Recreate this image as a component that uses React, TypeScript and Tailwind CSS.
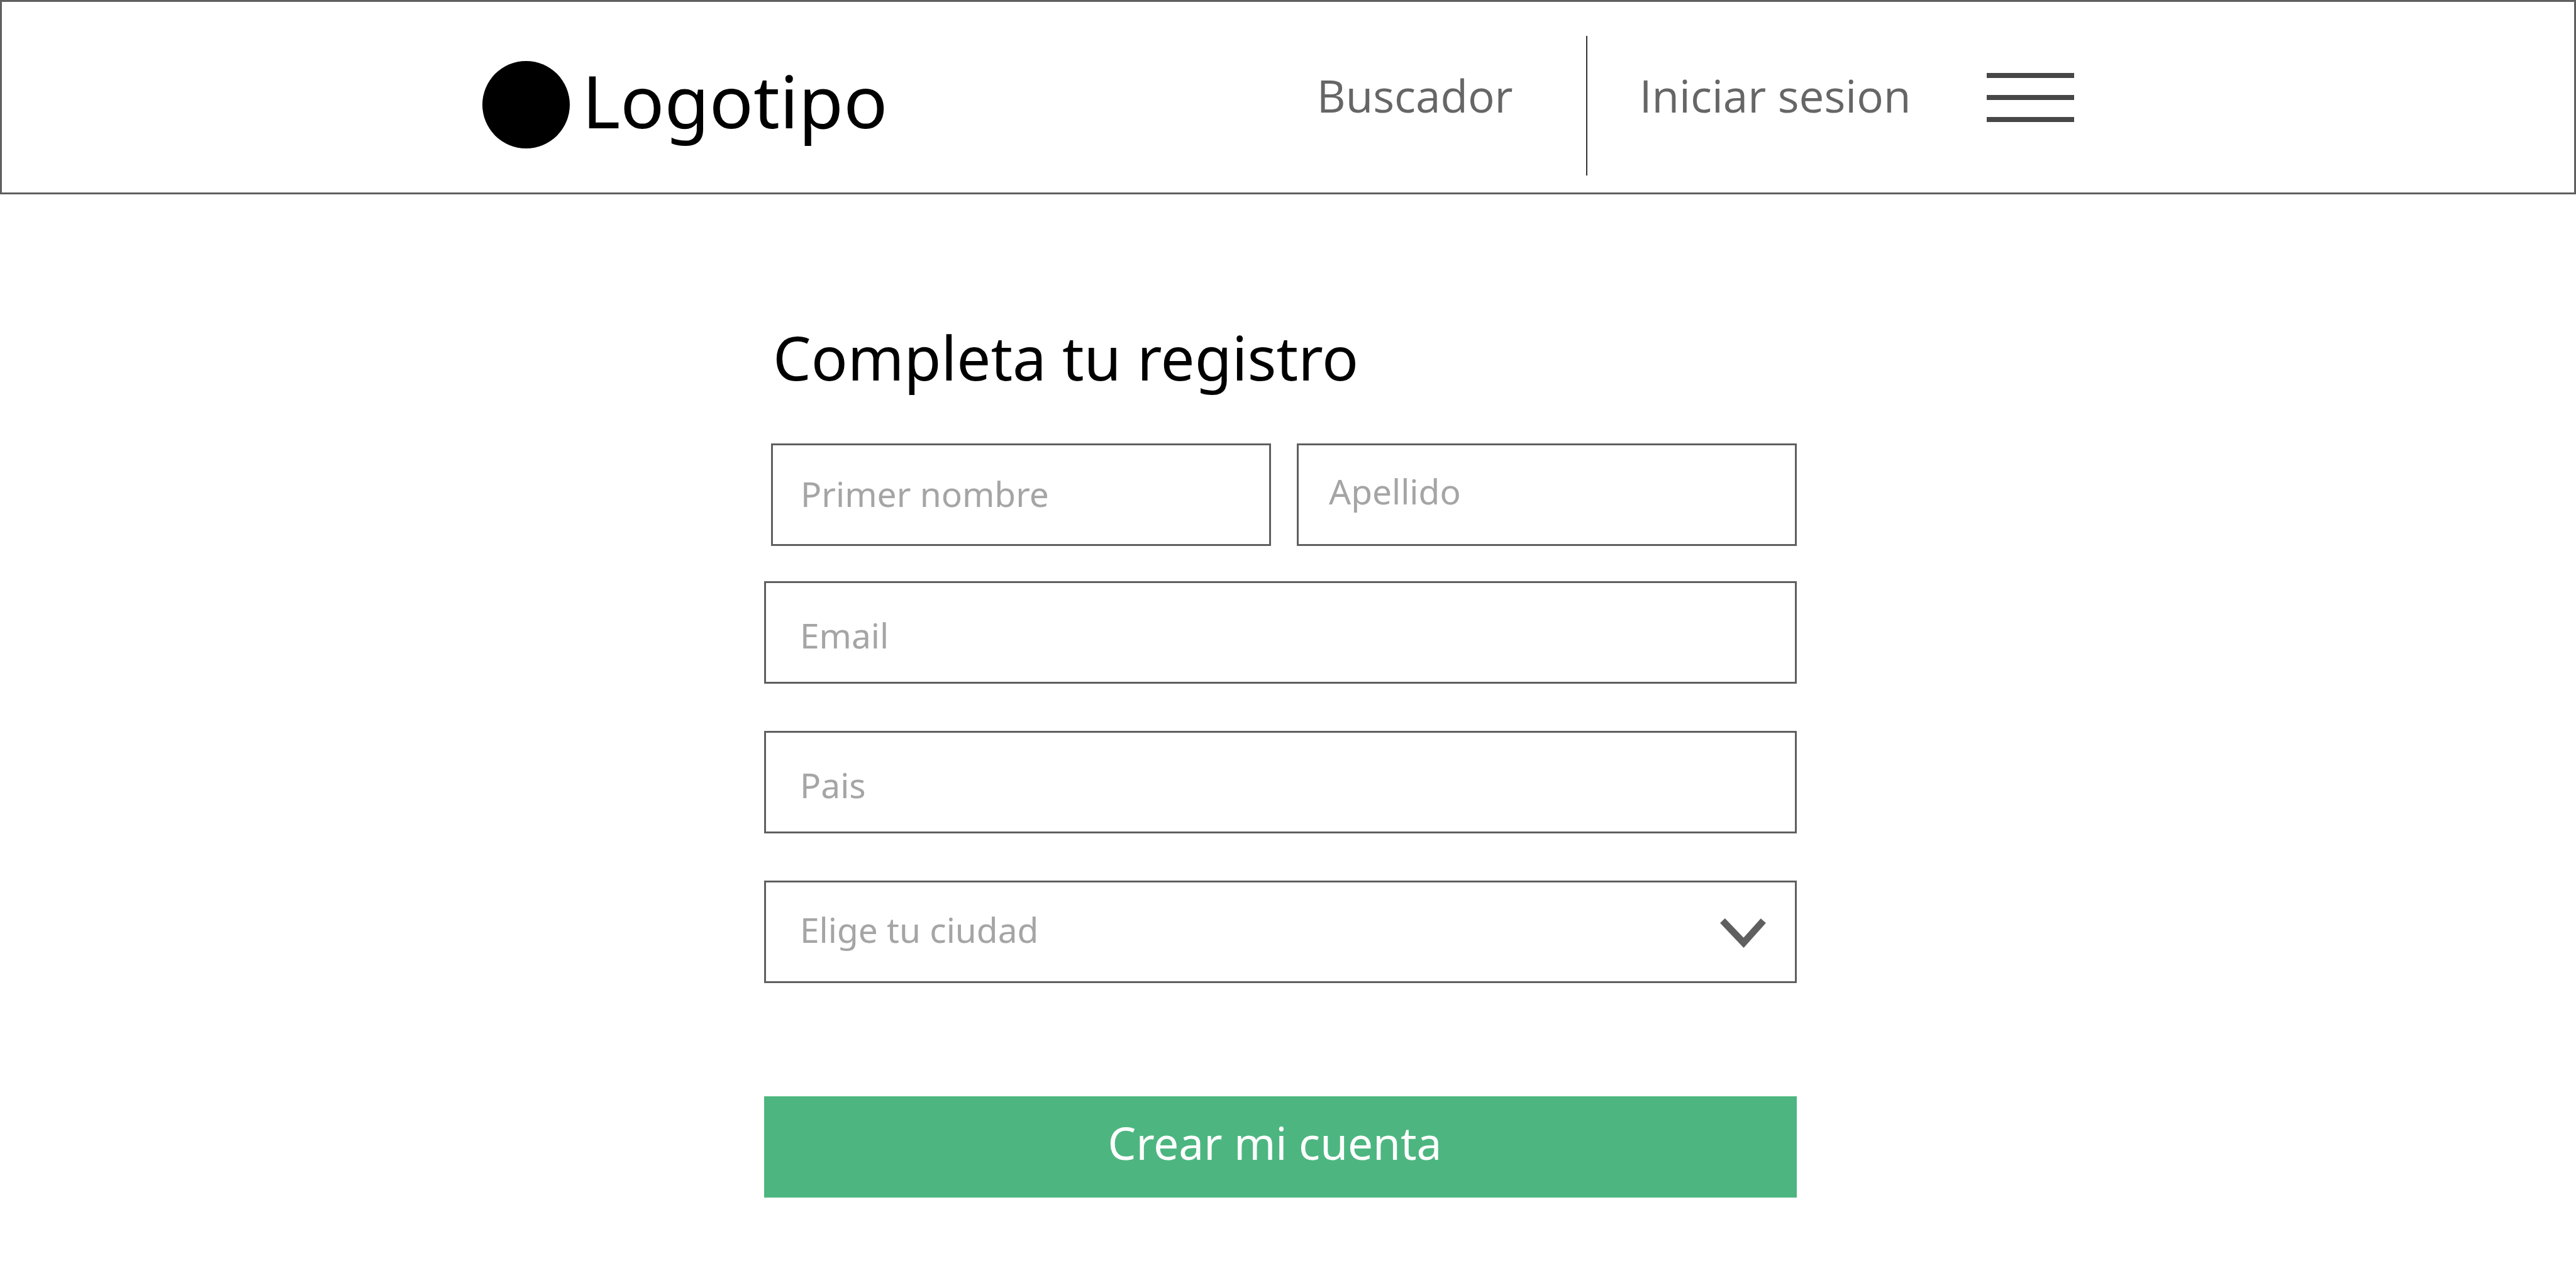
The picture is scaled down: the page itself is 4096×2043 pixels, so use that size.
import type { InputHTMLAttributes } from "react";

const fieldBox =
  "h-[163px] w-full min-w-0 rounded-none border-[3px] border-[#5f5f5f] bg-white text-[55px] text-[#a5a5a5] placeholder:text-[#a5a5a5] placeholder:opacity-100 outline-none";

function Field({
  label,
  className,
  ...props
}: { label: string; className: string } & InputHTMLAttributes<HTMLInputElement>) {
  return (
    <div className="min-w-0 flex-1">
      <input aria-label={label} placeholder={label} className={`${fieldBox} block ${className}`} {...props} />
    </div>
  );
}

function Header() {
  return (
    <header className="border-[3px] border-[#5f5f5f] pr-8">
      <div className="mx-auto flex w-full max-w-[2531px] items-center justify-between">
        <a href="#" className="flex items-center gap-5 pt-6 text-black">
          <span className="size-[139px] shrink-0 rounded-full bg-black" />
          <span className="pb-4 text-[116px] leading-none">Logotipo</span>
        </a>
        <nav className="flex items-center font-['Open_Sans','Noto_Sans',sans-serif] text-[71px] leading-none text-[#666666]">
          <a href="#" className="pb-1.5">
            Buscador
          </a>
          <span className="mt-[54px] mr-[83px] mb-[27px] ml-[116px] h-[222px] w-[2px] bg-[#333333]" />
          <a href="#" className="pb-1.5">
            Iniciar sesion
          </a>
          <button type="button" aria-label="Menú" className="ml-[120px] flex w-[139px] flex-col gap-[27px]">
            <span className="h-2 w-full bg-[#474747]" />
            <span className="h-2 w-full bg-[#474747]" />
            <span className="h-2 w-full bg-[#474747]" />
          </button>
        </nav>
      </div>
    </header>
  );
}

export default function App() {
  return (
    <div className="min-h-screen bg-white font-['Noto_Sans',sans-serif]">
      <Header />
      <main className="pt-[195px] pr-6">
        <form className="mx-auto flex w-full max-w-[1642px] flex-col" onSubmit={(e) => e.preventDefault()}>
          <h1 className="mb-[73px] pl-3.5 text-[96px] leading-[128px] text-black">Completa tu registro</h1>
          <div className="mb-14 flex gap-[41px] pl-[11px]">
            <Field label="Primer nombre" name="nombre" className="pb-1 pl-11" />
            <Field label="Apellido" name="apellido" className="pb-3 pl-12" />
          </div>
          <div className="flex flex-col gap-[75px]">
            <Field label="Email" name="email" type="email" className="pt-2 pl-[54px]" />
            <Field label="Pais" name="pais" className="pt-2 pl-[54px]" />
            <div className="relative">
              <select
                aria-label="Elige tu ciudad"
                name="ciudad"
                defaultValue=""
                className={`${fieldBox} block appearance-none pb-1.5 pl-[54px]`}
              >
                <option value="">Elige tu ciudad</option>
              </select>
              <svg
                aria-hidden="true"
                viewBox="0 0 338 218"
                className="pointer-events-none absolute top-[60px] right-[49px] h-[47px] w-[73px] fill-[#5f5f5f]"
              >
                <path d="M0 35 36 0 173 143 300 1 338 35 174 218Z" />
              </svg>
            </div>
          </div>
          <button type="submit" className="mt-[180px] h-[161px] bg-[#4db680] pr-[18px] pb-3 text-[71px] text-white">
            Crear mi cuenta
          </button>
        </form>
      </main>
    </div>
  );
}
